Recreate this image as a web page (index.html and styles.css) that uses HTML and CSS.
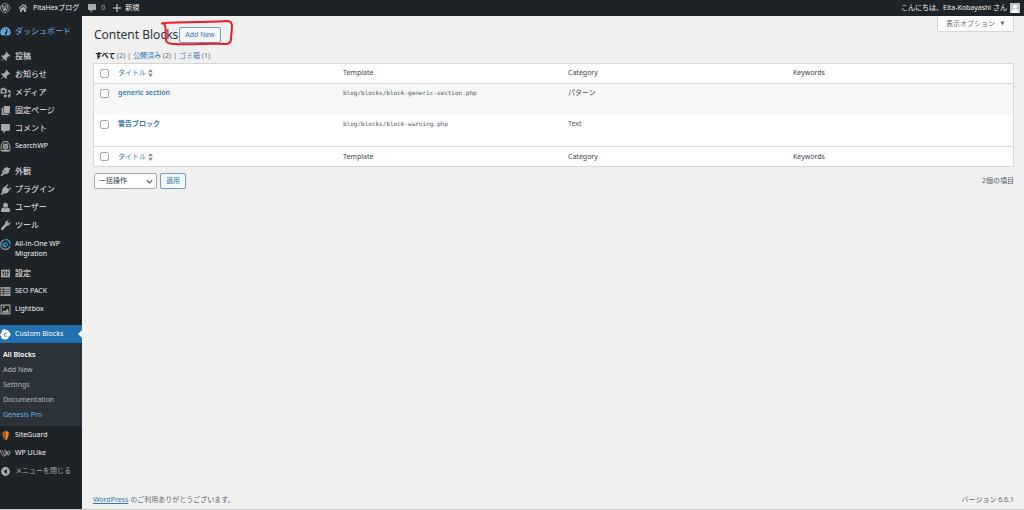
FILE: index.html
```html
<!DOCTYPE html>
<html lang="ja">
<head>
<meta charset="utf-8">
<title>Content Blocks</title>
<link rel="stylesheet" href="styles.css">
</head>
<body>
<header class="bar">
  <a class="bar-item" href="#" aria-label="WordPress"><svg class="icon" viewBox="0 0 20 20"><circle cx="10" cy="10" r="9" fill="none" stroke="currentColor" stroke-width="1.6"/><path d="M3 6h5M10 6h5M4.500 6.500 8 16l2.500-7M8.500 6.500 12.500 16l2.500-7c.6-2-.9-2.500-.3-4.200" fill="none" stroke="currentColor" stroke-width="2"/></svg></a>
  <a class="bar-item" href="#"><svg class="icon" viewBox="0 0 20 20"><path d="M10 2 1 10l1.500 1.500L10 5l7.500 6.500L19 10l-3-2.700V3h-2.500v2zM4 12v6h4v-4h4v4h4v-6l-6-5z" fill="currentColor"/></svg><span class="bar-text">PitaHexブログ</span></a>
  <a class="bar-item comments" href="#"><svg class="icon" viewBox="0 0 20 20"><path d="M3 2h14a1 1 0 0 1 1 1v10a1 1 0 0 1-1 1h-5l-5 5v-5H3a1 1 0 0 1-1-1V3a1 1 0 0 1 1-1z" fill="currentColor"/></svg><span class="count">0</span></a>
  <a class="bar-item new" href="#"><svg class="icon" viewBox="0 0 20 20"><path d="M8.500 2h3v6.500H18v3h-6.500V18h-3v-6.500H2v-3h6.500z" fill="currentColor"/></svg><span class="bar-text">新規</span></a>
  <a class="bar-item account" href="#"><span class="bar-text">こんにちは、Eita-Kobayashi さん</span><svg class="avatar" viewBox="0 0 20 20"><path fill="#c3c4c7" d="M0 0h20v20H0z"/><circle cx="10" cy="7.500" r="4" fill="#fff"/><path d="M2.500 20c0-6 3-8 7.500-8s7.500 2 7.500 8z" fill="#fff"/></svg></a>
</header>
<div class="page">
  <nav class="menu">
    <a class="item ja current-link" href="#"><svg class="icon" viewBox="0 0 20 20"><path d="M3 17a9 9 0 1 1 14 0z" fill="currentColor"/><path d="M9 14 13 6l-1.500 9zM4 11h2M6 6l1.500 1.500M10 4v2M14 11h2" stroke="#1d2327" stroke-width="1.500" fill="#1d2327"/></svg>ダッシュボード</a>
    <div class="group">
      <a class="item ja" href="#"><svg class="icon" viewBox="0 0 20 20"><path d="m11 1 8 8-2 1-1.500-.5-3.500 3.500.5 3.500-1.500 1.500-4-4-5 4.500-.5-.5L6 13 2 9l1.500-1.500 3.500.5 3.500-3.500L10 3z" fill="currentColor"/></svg>投稿</a>
      <a class="item ja" href="#"><svg class="icon" viewBox="0 0 20 20"><path d="m11 1 8 8-2 1-1.500-.5-3.500 3.500.5 3.500-1.500 1.500-4-4-5 4.500-.5-.5L6 13 2 9l1.500-1.500 3.500.5 3.500-3.500L10 3z" fill="currentColor"/></svg>お知らせ</a>
      <a class="item ja" href="#"><svg class="icon" viewBox="0 0 20 20"><path d="M1 3h2l1-1.500h4L9 3h3v9H1z" fill="currentColor"/><circle cx="6.500" cy="7.500" r="2.500" fill="#1d2327"/><path d="M14 6h5v10.500a2.500 2.500 0 1 1-2-2.500V9h-3zM9 14h3v2.500A2.500 2.500 0 1 1 9.500 14z" fill="currentColor"/></svg>メディア</a>
      <a class="item ja" href="#"><svg class="icon" viewBox="0 0 20 20"><path d="M7 2h11v13H7zM3 5h3v11h9v2H3z" fill="currentColor"/></svg>固定ページ</a>
      <a class="item ja" href="#"><svg class="icon" viewBox="0 0 20 20"><path d="M3 2h14a1 1 0 0 1 1 1v10a1 1 0 0 1-1 1h-6l-5 5v-5H3a1 1 0 0 1-1-1V3a1 1 0 0 1 1-1z" fill="currentColor"/></svg>コメント</a>
      <a class="item" href="#"><svg class="icon" viewBox="0 0 20 20"><path d="M6 1h8v3h2l2 4v10H2V8l2-4h2z" fill="none" stroke="currentColor" stroke-width="1.700"/><ellipse cx="10" cy="10" rx="5" ry="5.500" fill="currentColor"/><path d="M7 7l6 7M13 7l-6 7" stroke="#1d2327"/><path d="M4 16h12v3H4z" fill="currentColor"/></svg>SearchWP</a>
    </div>
    <div class="group">
      <a class="item ja" href="#"><svg class="icon" viewBox="0 0 20 20"><path d="m9 3 4-1 2 2 3-1 1 2-3 3 1 3-4 3-7-8zM5 7l8 7-3 1-2-1-5 5-2-2 4-5-1-3z" fill="currentColor"/></svg>外観</a>
      <a class="item ja" href="#"><svg class="icon" viewBox="0 0 20 20"><path d="m13 1 2 1-3 4 3 3 4-3 1 2-4 4c-1 5-5 6-9 5l-4 3-2-2 3-3C3 10 5 6 9 5z" fill="currentColor"/></svg>プラグイン</a>
      <a class="item ja" href="#"><svg class="icon" viewBox="0 0 20 20"><circle cx="10" cy="6" r="4.500" fill="currentColor"/><path d="M2 18v-5c1-2 3-3 5-3l3 2 3-2c2 0 4 1 5 3v5z" fill="currentColor"/></svg>ユーザー</a>
      <a class="item ja" href="#"><svg class="icon" viewBox="0 0 20 20"><path d="M17 8c1.500-1.500 2-3.500 1.500-5l-3.500 3-2-2 3-3c-4-1-8 2-6.500 6L2 15c-1 2 1 4 3 3l8-8c1.500.3 3-.5 4-2z" fill="currentColor"/></svg>ツール</a>
      <a class="item two-line" href="#"><svg class="icon" viewBox="0 0 20 20"><path d="M8 2a8.500 8.500 0 1 0 10 10" fill="none" stroke="#8c9aa3" stroke-width="2"/><path d="M9 1c6-1 10 4 9 9M6 7c-2 4 1 8 5 7" fill="none" stroke="#2496c7" stroke-width="2.500"/><circle cx="10.500" cy="10" r="3" fill="none" stroke="#2496c7" stroke-width="2"/></svg>All-in-One WP Migration</a>
      <a class="item ja" href="#"><svg class="icon" viewBox="0 0 20 20"><path d="M2 3h16v14H2z" fill="currentColor"/><path d="M6 5v10M4 8h4M10 5v10M8.500 12h3M14 5v10M12 8h4" stroke="#1d2327" stroke-width="1.300"/></svg>設定</a>
      <a class="item" href="#"><svg class="icon" viewBox="0 0 20 20"><path d="M1 2h18v16H1z" fill="currentColor"/><path d="M2 6h16M2 10h16M2 14h16M6 3v14" stroke="#1d2327" stroke-width="1.300"/></svg>SEO PACK</a>
      <a class="item" href="#"><svg class="icon" viewBox="0 0 20 20"><path d="M2 2h16v16H2z" fill="none" stroke="currentColor" stroke-width="2"/><path d="m4 16 3-5 3 2 4-5 2 8z" fill="currentColor"/><circle cx="7" cy="6" r="1.700" fill="currentColor"/></svg>Lightbox</a>
    </div>
    <div class="group">
      <a class="item selected" href="#"><svg class="icon" viewBox="0 0 20 20"><path d="M7 0c3 2 6 1 9 4l4 6-4 4c-1 4-5 6-8 5-3 0-6-2-6-5L0 10l3-4c0-3 2-5 4-6z" fill="#fff"/><path d="M12.500 8a3 3 0 1 0 0 4.500" fill="none" stroke="#2271b1" stroke-width="1.700"/></svg>Custom Blocks</a>
      <div class="submenu">
        <a class="sub active" href="#">All Blocks</a>
        <a class="sub" href="#">Add New</a>
        <a class="sub" href="#">Settings</a>
        <a class="sub" href="#">Documentation</a>
        <a class="sub pro" href="#">Genesis Pro</a>
      </div>
      <a class="item" href="#"><svg class="icon" viewBox="0 0 20 20"><path d="M4 4l6-3v18C6 16 4 12 4 4z" fill="#8b4a20"/><path d="M10 1l6 3c0 8-2 12-6 15z" fill="#e48a2c"/><path d="M7 4v9" stroke="#d9722c" stroke-width="2"/></svg>SiteGuard</a>
      <a class="item" href="#"><svg class="icon" viewBox="0 0 20 20"><path d="M0 5h4l5 9 3-3-4-6 2-1 6 8 3-5-3-2-7 9-3 1-5-7zM11 5l4 9" fill="none" stroke="currentColor" stroke-width="1.500"/></svg>WP ULike</a>
      <button class="item collapse" type="button"><svg class="icon" viewBox="0 0 20 20"><circle cx="10" cy="10" r="8" fill="currentColor"/><path d="M12.500 5v10L6.500 10z" fill="#1d2327"/></svg>メニューを閉じる</button>
    </div>
  </nav>
  <main class="content">
    <div class="top">
      <div class="heading">
        <h1>Content Blocks</h1>
        <a class="button add" href="#">Add New</a>
        <svg class="marker" viewBox="0 0 76 28" aria-hidden="true"><path d="M2 4.500C6 2.500 40 4 67 2c4 0 5 2 5 5l-1 13c0 3-2 5-6 5-16-1-32 1-50 0-6 0-9-1-9-4C5 16 7 9 4 4.500" fill="none" stroke="#ee1c24" stroke-width="2" stroke-linecap="round" stroke-linejoin="round"/></svg>
      </div>
      <button class="options" type="button">表示オプション <svg class="caret" viewBox="0 0 10 10"><path d="M1 1h8L5 9z" fill="currentColor"/></svg></button>
    </div>
    <div class="filters"><span><a class="all" href="#">すべて</a> (2)</span><span>|</span><span><a href="#">公開済み</a> (2)</span><span>|</span><span><a href="#">ゴミ箱</a> (1)</span></div>
    <table class="list">
      <thead>
        <tr><th class="check"><input type="checkbox" aria-label="すべて選択"></th><th><a href="#">タイトル <svg class="sort" viewBox="0 0 6 10"><path d="M0 4h6L3 0zM0 6h6L3 10z" fill="currentColor"/></svg></a></th><th>Template</th><th>Category</th><th>Keywords</th></tr>
      </thead>
      <tbody>
        <tr class="alt"><td class="check"><input type="checkbox" aria-label="generic section"></td><td><a class="title" href="#">generic section</a></td><td><code>blog/blocks/block-generic-section.php</code></td><td>パターン</td><td></td></tr>
        <tr><td class="check"><input type="checkbox" aria-label="警告ブロック"></td><td><a class="title" href="#">警告ブロック</a></td><td><code>blog/blocks/block-warning.php</code></td><td>Text</td><td></td></tr>
      </tbody>
      <tfoot>
        <tr><th class="check"><input type="checkbox" aria-label="すべて選択"></th><th><a href="#">タイトル <svg class="sort" viewBox="0 0 6 10"><path d="M0 4h6L3 0zM0 6h6L3 10z" fill="currentColor"/></svg></a></th><th>Template</th><th>Category</th><th>Keywords</th></tr>
      </tfoot>
    </table>
    <div class="actions">
      <span class="picker"><select aria-label="一括操作"><option>一括操作</option></select><svg class="chevron" viewBox="0 0 10 10"><path d="m1 3 4 4 4-4" fill="none" stroke="currentColor" stroke-width="1.500"/></svg></span>
      <button class="button" type="button">適用</button>
      <span class="total">2個の項目</span>
    </div>
    <footer class="foot"><span><a href="#">WordPress</a> のご利用ありがとうございます。</span><span>バージョン 6.6.1</span></footer>
  </main>
</div>
</body>
</html>
```
FILE: styles.css
```css
* { box-sizing: border-box; }
body {
  margin: 0;
  min-height: 100vh;
  display: flex;
  flex-direction: column;
  background: #f0f0f1;
  color: #50575e;
  font: 7px/10px "Noto Sans", "Noto Sans CJK JP", sans-serif;
}
a { color: #3579b5; text-decoration: none; }
button, select { font: inherit; }

.bar { display: flex; align-items: center; height: 16px; background: #1d2327; padding-right: 4px; }
.bar-item { display: flex; align-items: center; gap: 5px; color: #a7aaad; margin-right: 8px; }
.bar-text { color: #f0f0f1; }
.bar .comments { gap: 4px; margin-right: 7px; }
.bar .new { gap: 3px; }
.bar .account { margin: 0 0 0 auto; gap: 3px; }
.avatar { width: 10px; height: 10px; }
.icon { width: 11px; height: 11px; flex: none; }
.bar .icon { width: 10px; height: 10px; }

.page { flex: 1; display: flex; border-bottom: 1px solid #c9cacc; }
.menu { width: 82px; flex: none; background: #1d2327; padding-top: 6px; display: flex; flex-direction: column; gap: 7px; }
.group { display: flex; flex-direction: column; }
.item {
  display: flex;
  align-items: center;
  gap: 4px;
  min-height: 18px;
  padding: 0;
  border: 0;
  background: none;
  color: #f0f0f1;
  text-align: left;
}
.item .icon { color: #a7aaad; }
.ja { font-size: 8px; }
.current-link, .current-link .icon { color: #72aee6; }
.two-line { padding: 5px 8px 5px 0; align-items: flex-start; }
.selected { background: #2271b1; color: #fff; position: relative; }
.selected::after {
  content: "";
  position: absolute;
  right: 0;
  top: 5px;
  border: 4px solid transparent;
  border-left: 0;
  border-right-color: #f0f0f1;
}
.submenu { background: #2c3338; padding: 4px 3px; display: flex; flex-direction: column; }
.sub { color: #b4b9be; line-height: 15px; }
.active { color: #fff; font-weight: 600; }
.pro { color: #72aee6; }
.collapse, .collapse .icon { color: #a7aaad; }

.content { flex: 1; min-width: 0; padding: 0 10px 4px 11px; display: flex; flex-direction: column; }
.top { display: flex; justify-content: space-between; align-items: flex-start; }
.heading { position: relative; display: flex; align-items: center; gap: 1px; padding: 10px 0 0 1px; }
h1 { margin: 0; color: #2c3338; font-size: 12px; line-height: 18px; font-weight: 400; }
.button {
  border: 1px solid #6a9dc8;
  border-radius: 2px;
  background: #f6f7f7;
  color: #3579b5;
  height: 16px;
  padding: 0 5px;
  line-height: 14px;
}
.marker { position: absolute; left: 67px; top: 3px; width: 76px; height: 28px; }
.options {
  display: flex;
  align-items: center;
  gap: 5px;
  height: 16px;
  padding: 0 8px;
  border: 1px solid #d5d6d8;
  border-top: 0;
  border-radius: 0 0 2px 2px;
  background: #fff;
  color: #646970;
}
.caret { width: 5px; height: 5px; }
.filters { display: flex; gap: 2px; padding: 7px 0 2px 2px; color: #646970; }
.all { color: #000; font-weight: 600; }

.list { width: 100%; table-layout: fixed; border-collapse: separate; border-spacing: 0; border: 1px solid #d5d6d8; background: #fff; }
.list th, .list td { padding: 4px 5px; text-align: left; vertical-align: top; font-weight: 400; height: 20px; }
.list th { color: #3c434a; }
.list td { height: 31px; }
.list thead th { border-bottom: 1px solid #d5d6d8; }
.list tfoot th { border-top: 1px solid #d5d6d8; padding-top: 5px; }
.list .check { width: 19px; padding: 5px 0 0 6px; line-height: 0; }
.alt { background: #f6f7f7; }
.title { font-weight: 600; }
code { font: 6px/10px "DejaVu Sans Mono", monospace; }
.sort { width: 5px; height: 8px; vertical-align: middle; color: #8c8f94; }
input {
  appearance: none;
  width: 9px;
  height: 9px;
  margin: 0;
  border: 1px solid #a5a8ac;
  border-radius: 2px;
  background: #fff;
}
.actions { display: flex; align-items: center; gap: 3px; padding: 6px 0 0 1px; }
.picker { position: relative; display: flex; }
select {
  appearance: none;
  width: 63px;
  height: 16px;
  padding: 0 4px;
  border: 1px solid #a5a8ac;
  border-radius: 2px;
  background: #fff;
  color: #2c3338;
}
.chevron { position: absolute; right: 4px; top: 5px; width: 7px; height: 7px; pointer-events: none; }
.total { margin-left: auto; }
.foot { margin-top: auto; display: flex; justify-content: space-between; color: #646970; }
.foot a { text-decoration: underline; }
```
